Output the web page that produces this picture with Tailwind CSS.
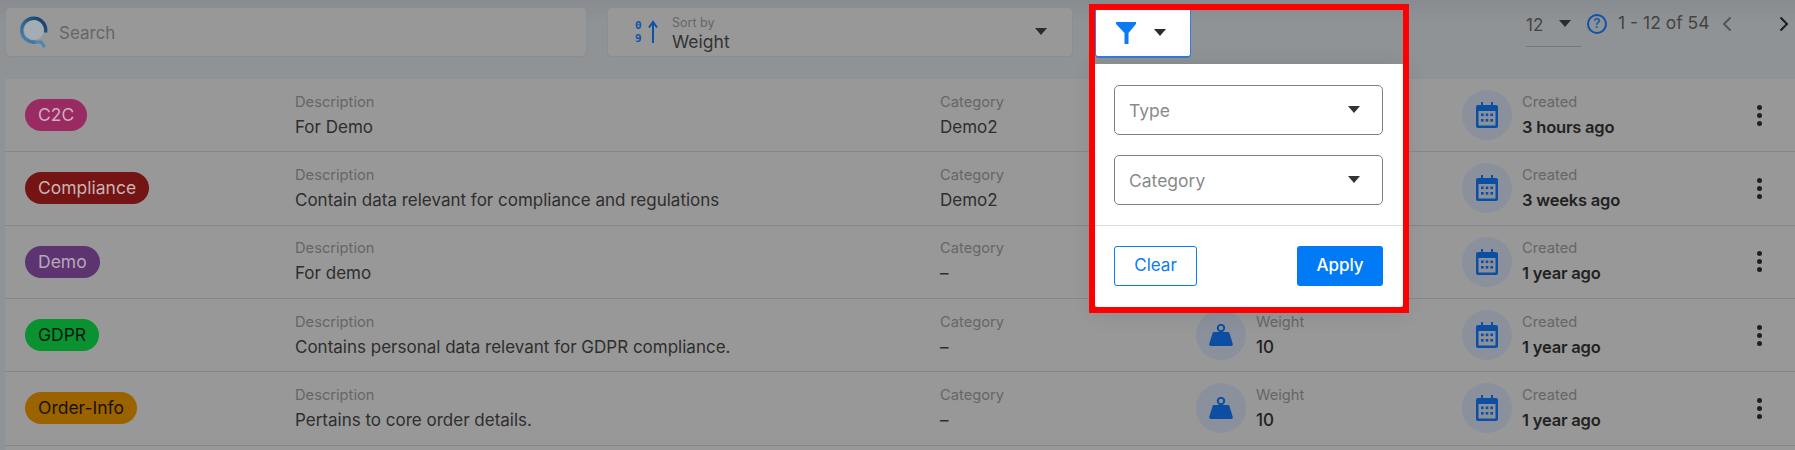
<!DOCTYPE html>
<html lang="en">
<head>
  <meta charset="UTF-8" />
  <meta name="viewport" content="width=device-width, initial-scale=1.0"/>
  <title>Tags</title>
  <script src="https://cdn.jsdelivr.net/npm/@tailwindcss/browser@4"></script>
</head>
<body class="bg-[#8f9396] font-['Inter',sans-serif] h-[450px] overflow-hidden relative">
  <!-- Toolbar -->
  <div class="flex items-start h-[79px] pl-[5px] pt-[7px] bg-linear-to-b from-[#888c90] to-[#8f9396] to-[30%]">
    <div class="w-[582px] h-[50px] bg-[#989898] border border-[#8b8e91] rounded-[5px] flex items-center pl-[13px]">
      <svg width="32" height="34" viewBox="0 0 32 34" class="shrink-0">
        <defs>
          <linearGradient id="ring" x1="1" y1="0" x2="0" y2="1">
            <stop offset="0" stop-color="#0f3b66"/>
            <stop offset="1" stop-color="#4d86b3"/>
          </linearGradient>
        </defs>
        <circle cx="15" cy="15" r="10" fill="#a4adb4"/>
        <path d="M26.500 17.500A12 12 0 1 0 17 27" fill="none" stroke="url(#ring)" stroke-width="3.400"/>
        <path d="M17 27h5l3 4" fill="none" stroke="#4d86b3" stroke-width="3" stroke-linecap="round"/>
      </svg>
      <span class="ml-[8px] mt-[3px] text-[17px] text-[#666]">Search</span>
    </div>
    <div class="ml-[20px] w-[466px] h-[50px] bg-[#989898] border border-[#8b8e91] rounded-[5px] flex items-center pl-[27px] pr-[24px]">
      <div class="flex items-center shrink-0 w-[24px]">
        <div class="flex flex-col font-['DejaVu_Sans_Mono',monospace] font-bold text-[11px] leading-[13px] text-[#0b53a8]">
          <span>0</span>
          <span>9</span>
        </div>
        <svg width="10" height="24" viewBox="0 0 10 24" class="ml-[6px]"><path d="M5 23V2M1 7.500 5 2l4 5.500" fill="none" stroke="#0b53a8" stroke-width="2"/></svg>
      </div>
      <div class="ml-[13px] mt-[3px] flex flex-col leading-none">
        <span class="text-[12.5px] text-[#666] mb-[4px]">Sort by</span>
        <span class="text-[17.5px] text-[#333]">Weight</span>
      </div>
      <svg width="14" height="8" viewBox="0 0 14 8" class="ml-auto"><path d="M1 0h12L7 7z" fill="#2c2c2c"/></svg>
    </div>
    <!-- Filter button and its open panel -->
    <div class="relative ml-[22px] mt-[3px]">
      <div class="w-[96px] h-[48px] bg-white border-b-2 border-x border-[#2f7de0] rounded-b-[4px] flex items-center pl-[20px]">
        <svg width="20" height="22" viewBox="0 0 20 22"><path d="M0 0h20v2l-7.500 9v11h-4V11L0 2z" fill="#0a7bf2"/></svg>
        <svg width="14" height="8" viewBox="0 0 14 8" class="ml-[17px]"><path d="M1 0h12L7 7z" fill="#2c2c2c"/></svg>
      </div>
      <div class="absolute left-0 top-[54px] w-[308px] h-[243px] bg-white rounded-b-[3px] shadow-[0_4px_24px_rgba(0,0,0,0.12)] z-10">
        <div class="px-[19px] pt-[21px] flex flex-col gap-[20px]">
          <div class="h-[50px] w-[269px] border border-[#808080] rounded-[5px] flex items-center px-[14px]">
            <span class="mt-[2px] text-[17.5px] text-[#8a8a8a]">Type</span>
            <svg width="14" height="8" viewBox="0 0 14 8" class="ml-auto mr-[7px]"><path d="M1 0h12L7 7z" fill="#333"/></svg>
          </div>
          <div class="h-[50px] w-[269px] border border-[#808080] rounded-[5px] flex items-center px-[14px]">
            <span class="mt-[2px] text-[17.5px] text-[#8a8a8a]">Category</span>
            <svg width="14" height="8" viewBox="0 0 14 8" class="ml-auto mr-[7px]"><path d="M1 0h12L7 7z" fill="#333"/></svg>
          </div>
        </div>
        <div class="mt-[20px] border-t border-[#dedede] pl-[19px] pr-[20px] pt-[20px] flex justify-between">
          <button class="w-[83px] h-[40px] border border-[#0a7bf2] rounded-[3px] text-[#0a7bf2] text-[17px]">Clear</button>
          <button class="w-[86px] h-[40px] bg-[#007bf5] rounded-[3px] text-white text-[17px] font-medium">Apply</button>
        </div>
      </div>
    </div>
    <!-- Pager -->
    <div class="ml-[335px] h-[40px] w-[55px] border-b border-[#75787b] flex items-start pt-[6px] text-[17px] text-[#444] relative">
      <span>12</span>
      <svg width="12" height="7" viewBox="0 0 12 7" class="absolute left-[33px] top-[13px]"><path d="M0 0h12L6 7z" fill="#2c2c2c"/></svg>
    </div>
    <div class="ml-[6px] h-[33px] flex items-center">
      <div class="w-[20px] h-[20px] rounded-full border-2 border-[#0b53a8] flex items-center justify-center text-[13px] leading-none font-medium text-[#0b53a8]">?</div>
      <span class="ml-[11px] text-[17.5px] text-[#444] whitespace-nowrap">1 - 12 of 54</span>
      <svg width="10" height="16" viewBox="0 0 10 16" class="ml-[12px]"><path d="M8.500 1.500 2 8l6.500 6.500" fill="none" stroke="#555" stroke-width="2"/></svg>
      <svg width="10" height="16" viewBox="0 0 10 16" class="ml-[47px]"><path d="M1.500 1.500 8 8l-6.500 6.500" fill="none" stroke="#1d1d1d" stroke-width="2"/></svg>
    </div>
  </div>

  <!-- Red highlight drawn over the screenshot -->
  <div class="absolute left-[1089px] top-[4px] w-[320px] h-[309px] border-[6px] border-[#ff0000] z-20 pointer-events-none"></div>

  <!-- Tag rows -->
  <div id="rows" class="ml-[5px] bg-[#989898]"></div>

<script>
  const tags = [
    { name: 'C2C', badge: 'bg-[#9a2a62] text-[#c9b3be]', desc: 'For Demo', cat: 'Demo2', created: '3 hours ago' },
    { name: 'Compliance', badge: 'bg-[#751414] text-[#c9b3b3]', desc: 'Contain data relevant for compliance and regulations', cat: 'Demo2', created: '3 weeks ago' },
    { name: 'Demo', badge: 'bg-[#5e3470] text-[#b3a8bb]', desc: 'For demo', cat: '–', created: '1 year ago' },
    { name: 'GDPR', badge: 'bg-[#0a9130] text-[#0c1a10]', desc: 'Contains personal data relevant for GDPR compliance.', cat: '–', created: '1 year ago', weight: '10' },
    { name: 'Order-Info', badge: 'bg-[#9a6300] text-[#1a1206]', desc: 'Pertains to core order details.', cat: '–', created: '1 year ago', weight: '10' },
  ];

  const calendar = `<svg width="24" height="26" viewBox="0 0 24 26"><path d="M6 0h2v3h8V0h2v3h3a2 2 0 0 1 2 2v19a2 2 0 0 1-2 2H3a2 2 0 0 1-2-2V5a2 2 0 0 1 2-2h3z" fill="#0b4ea2"/><rect x="3.500" y="9" width="17" height="14.500" fill="#8a919c"/><g fill="#0b4ea2"><rect x="6" y="11.500" width="2.600" height="2.600"/><rect x="10.700" y="11.500" width="2.600" height="2.600"/><rect x="15.400" y="11.500" width="2.600" height="2.600"/><rect x="6" y="17" width="2.600" height="2.600"/><rect x="10.700" y="17" width="2.600" height="2.600"/><rect x="15.400" y="17" width="2.600" height="2.600"/></g></svg>`;
  const kettle = `<svg width="24" height="22" viewBox="0 0 24 22"><circle cx="12" cy="4" r="3.200" fill="none" stroke="#0b4ea2" stroke-width="2"/><path d="M5 8h14q1.200 0 1.500 1.200L23.800 20q.4 2-1.600 2H1.800Q-.2 22 .2 20L3.500 9.200Q3.800 8 5 8z" fill="#0b4ea2"/></svg>`;

  document.getElementById('rows').innerHTML = tags.map(t => `
    <div class="h-[73.33px] border-b border-[#85888a] pl-[20px] grid grid-cols-[270px_645px_256px_266px_1fr] items-center">
      <div><span class="inline-flex items-center h-[32px] px-[13px] rounded-full text-[17.5px] ${t.badge}">${t.name}</span></div>
      <div>
        <div class="text-[14.7px] leading-[20px] text-[#666] mb-[4px]">Description</div>
        <div class="text-[17px] leading-[22px] pb-[1px] text-[#2e2e2e]">${t.desc}</div>
      </div>
      <div>
        <div class="text-[14.7px] leading-[20px] text-[#666] mb-[4px]">Category</div>
        <div class="text-[17px] leading-[22px] pb-[1px] text-[#2e2e2e]">${t.cat}</div>
      </div>
      <div class="flex items-center">
        ${t.weight ? `<div class="w-[50px] h-[50px] rounded-full bg-[#8a919c] flex items-center justify-center">${kettle}</div>
        <div class="ml-[10px]">
          <div class="text-[14.7px] leading-[20px] text-[#666] mb-[4px]">Weight</div>
          <div class="text-[17px] leading-[22px] pb-[1px] font-medium text-[#222]">${t.weight}</div>
        </div>` : ''}
      </div>
      <div class="flex items-center">
        <div class="w-[50px] h-[50px] rounded-full bg-[#8a919c] flex items-center justify-center">${calendar}</div>
        <div class="ml-[10px]">
          <div class="text-[14.7px] leading-[20px] text-[#666] mb-[4px]">Created</div>
          <div class="text-[16.5px] leading-[22px] pb-[1px] tracking-[-0.2px] font-semibold text-[#222]">${t.created}</div>
        </div>
        <div class="ml-auto mr-[33px] flex flex-col gap-[3px]">
          <span class="w-[5px] h-[5px] rounded-full bg-[#1f1f1f]"></span>
          <span class="w-[5px] h-[5px] rounded-full bg-[#1f1f1f]"></span>
          <span class="w-[5px] h-[5px] rounded-full bg-[#1f1f1f]"></span>
        </div>
      </div>
    </div>`).join('') + '<div class="h-[10px]"></div>';
</script>
</body>
</html>
